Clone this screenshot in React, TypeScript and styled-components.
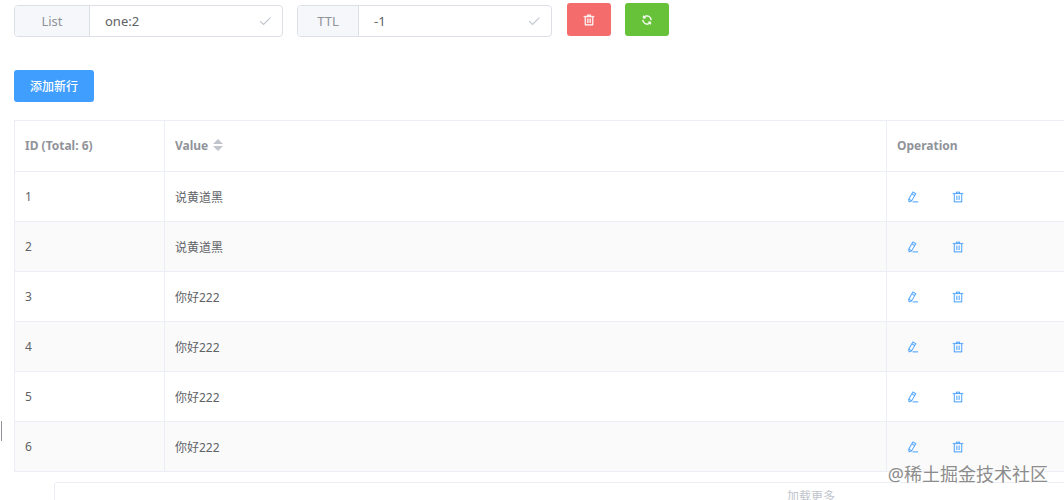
import React from 'react';
import styled, { createGlobalStyle } from 'styled-components';

const GlobalStyle = createGlobalStyle`
  * { box-sizing: border-box; }
  body {
    margin: 0;
    overflow: hidden;
    background: #fff;
    color: #606266;
    font-family: 'Noto Sans', 'Noto Sans CJK SC', sans-serif;
    font-size: 12px;
  }
  button, input { font-family: inherit; }
`;

const Page = styled.main`
  position: relative;
  height: 100vh;
  overflow: hidden;
  padding: 3px 0 0 14px;
`;

const Toolbar = styled.form`
  display: flex;
  align-items: flex-start;
  gap: 14px;
`;

const Field = styled.div<{ $width: number }>`
  display: flex;
  align-items: center;
  width: ${(p) => p.$width}px;
  height: 32px;
  margin-top: 2px;
  border: 1px solid #dcdfe6;
  border-radius: 4px;
  overflow: hidden;
`;

const FieldLabel = styled.label<{ $width: number }>`
  flex: none;
  width: ${(p) => p.$width}px;
  border-right: 1px solid #dcdfe6;
  background: #f5f7fa;
  color: #909399;
  font-size: 13px;
  line-height: 30px;
  text-align: center;
`;

const FieldInput = styled.input`
  flex: 1;
  min-width: 0;
  height: 30px;
  padding: 0 15px;
  border: 0;
  outline: 0;
  background: #fff;
  color: #606266;
  font-size: 13px;
`;

const FieldMark = styled.span`
  display: flex;
  flex: none;
  margin-right: 10px;
  color: #c0c4cc;
`;

const ButtonGroup = styled.div`
  display: flex;
  gap: 14px;
  padding-left: 1px;
`;

const IconButton = styled.button<{ $color: string }>`
  display: flex;
  align-items: center;
  justify-content: center;
  width: 44px;
  height: 33px;
  padding: 0;
  border: 0;
  border-radius: 3px;
  background: ${(p) => p.$color};
  color: #fff;
`;

const AddButton = styled.button`
  display: block;
  width: 80px;
  height: 32px;
  margin: 33px 0 18px;
  padding: 0;
  border: 0;
  border-radius: 3px;
  background: #409eff;
  color: #fff;
  font-size: 12px;
  font-weight: 500;
`;

const Table = styled.table`
  width: 100%;
  border-collapse: separate;
  border-spacing: 0;
  table-layout: fixed;
  border-top: 1px solid #ebeef5;
  border-left: 1px solid #ebeef5;
`;

const HeadCell = styled.th`
  height: 51px;
  padding: 0 10px 1px;
  border-right: 1px solid #ebeef5;
  border-bottom: 1px solid #ebeef5;
  color: #909399;
  font-weight: 700;
  text-align: left;
  &:last-child { border-right: 0; }
`;

const Cell = styled.td`
  height: 50px;
  padding: 0 10px;
  border-right: 1px solid #ebeef5;
  border-bottom: 1px solid #ebeef5;
  &:last-child { border-right: 0; }
`;

const Row = styled.tr`
  &:nth-child(even) { background: #fafafa; }
`;

const SortLabel = styled.span`
  display: flex;
  align-items: center;
  gap: 5px;
  padding-bottom: 1px;
`;

const Actions = styled.div`
  display: flex;
  gap: 33px;
  padding: 0 0 0 10px;
`;

const TextButton = styled.button`
  display: flex;
  padding: 0;
  border: 0;
  background: none;
  color: #409eff;
`;

const LoadMore = styled.button`
  display: block;
  width: calc(100% + 464px);
  height: 28px;
  margin: 10px 0 0 40px;
  padding: 0;
  border: 1px solid #ebeef5;
  border-radius: 3px;
  background: #fff;
  color: #c0c4cc;
  font-size: 12px;
`;

const SplitHandle = styled.span`
  position: absolute;
  left: 0;
  bottom: 59px;
  width: 2px;
  height: 20px;
  border-right: 1px solid #909399;
`;

const Watermark = styled.span`
  position: absolute;
  right: 16px;
  bottom: 13px;
  color: #8c8c8c;
  font-size: 18px;
  line-height: 26px;
  white-space: nowrap;
  text-shadow: 1px 1px 0 #fff;
`;

const paths = {
  trash:
    'M160 256H96a32 32 0 0 1 0-64h256V95.936a32 32 0 0 1 32-32h256a32 32 0 0 1 32 32V192h256a32 32 0 1 1 0 64h-64v672a32 32 0 0 1-32 32H192a32 32 0 0 1-32-32V256zm448-64v-64H416v64h192zM224 896h576V256H224v640zm192-128a32 32 0 0 1-32-32V416a32 32 0 0 1 64 0v320a32 32 0 0 1-32 32zm192 0a32 32 0 0 1-32-32V416a32 32 0 0 1 64 0v320a32 32 0 0 1-32 32z',
  edit:
    'm199.04 672.64 193.984 112 224-387.968-193.92-112-224 388.032zm-23.872 60.16 32.896 148.288 144.896-45.696L175.168 732.8zM455.04 229.248l193.92 112 56.704-98.112-193.984-112-56.64 98.112zM104.32 708.8l384-665.024 304.768 175.936L409.152 884.8h.064l-248.448 78.336L104.32 708.8zm384 254.272v-64h448v64h-448z',
  refresh:
    'M771.776 794.88A384 384 0 0 1 128 512h64a320 320 0 0 0 555.712 216.448H654.72a32 32 0 1 1 0-64h149.056a32 32 0 0 1 32 32v148.928a32 32 0 1 1-64 0v-50.56zM276.288 295.616h92.992a32 32 0 0 1 0 64H220.16a32 32 0 0 1-32-32V178.56a32 32 0 0 1 64 0v50.56A384 384 0 0 1 896.128 512h-64a320 320 0 0 0-555.776-216.384z',
};

const Icon = ({ name, weight = 0 }: { name: keyof typeof paths; weight?: number }) => (
  <svg width="12" height="12" viewBox="0 0 1024 1024" fill="currentColor" stroke="currentColor" strokeWidth={weight} aria-hidden="true">
    <path d={paths[name]} />
  </svg>
);

const Check = () => (
  <svg width="14" height="14" viewBox="0 0 14 14" fill="none" stroke="currentColor" strokeWidth="1.1" aria-hidden="true">
    <path d="M2.2 7.2 5.5 10.4 12.4 3.6" />
  </svg>
);

const SortArrows = () => (
  <svg width="10" height="12" viewBox="0 0 10 12" fill="#c0c4cc" aria-hidden="true">
    <path d="M5 0 10 5H0zM0 7h10L5 12z" />
  </svg>
);

const values = ['说黄道黑', '说黄道黑', '你好222', '你好222', '你好222', '你好222'];

export default function App() {
  return (
    <>
      <GlobalStyle />
      <Page>
        <Toolbar onSubmit={(e) => e.preventDefault()}>
          <Field $width={269}>
            <FieldLabel htmlFor="key" $width={75}>List</FieldLabel>
            <FieldInput id="key" defaultValue="one:2" />
            <FieldMark><Check /></FieldMark>
          </Field>
          <Field $width={255}>
            <FieldLabel htmlFor="ttl" $width={61}>TTL</FieldLabel>
            <FieldInput id="ttl" defaultValue="-1" />
            <FieldMark><Check /></FieldMark>
          </Field>
          <ButtonGroup>
            <IconButton type="button" $color="#f56c6c" aria-label="Delete key"><Icon name="trash" weight={40} /></IconButton>
            <IconButton type="button" $color="#67c23a" aria-label="Refresh"><Icon name="refresh" weight={50} /></IconButton>
          </ButtonGroup>
        </Toolbar>
        <AddButton type="button">添加新行</AddButton>
        <Table>
          <colgroup>
            <col style={{ width: 150 }} />
            <col />
            <col style={{ width: 177 }} />
          </colgroup>
          <thead>
            <tr>
              <HeadCell scope="col">ID (Total: {values.length})</HeadCell>
              <HeadCell scope="col"><SortLabel>Value <SortArrows /></SortLabel></HeadCell>
              <HeadCell scope="col">Operation</HeadCell>
            </tr>
          </thead>
          <tbody>
            {values.map((value, i) => (
              <Row key={i}>
                <Cell>{i + 1}</Cell>
                <Cell>{value}</Cell>
                <Cell>
                  <Actions>
                    <TextButton type="button" aria-label="Edit row"><Icon name="edit" weight={16} /></TextButton>
                    <TextButton type="button" aria-label="Delete row"><Icon name="trash" weight={16} /></TextButton>
                  </Actions>
                </Cell>
              </Row>
            ))}
          </tbody>
        </Table>
        <LoadMore type="button">加载更多</LoadMore>
        <SplitHandle />
        <Watermark>@稀土掘金技术社区</Watermark>
      </Page>
    </>
  );
}
